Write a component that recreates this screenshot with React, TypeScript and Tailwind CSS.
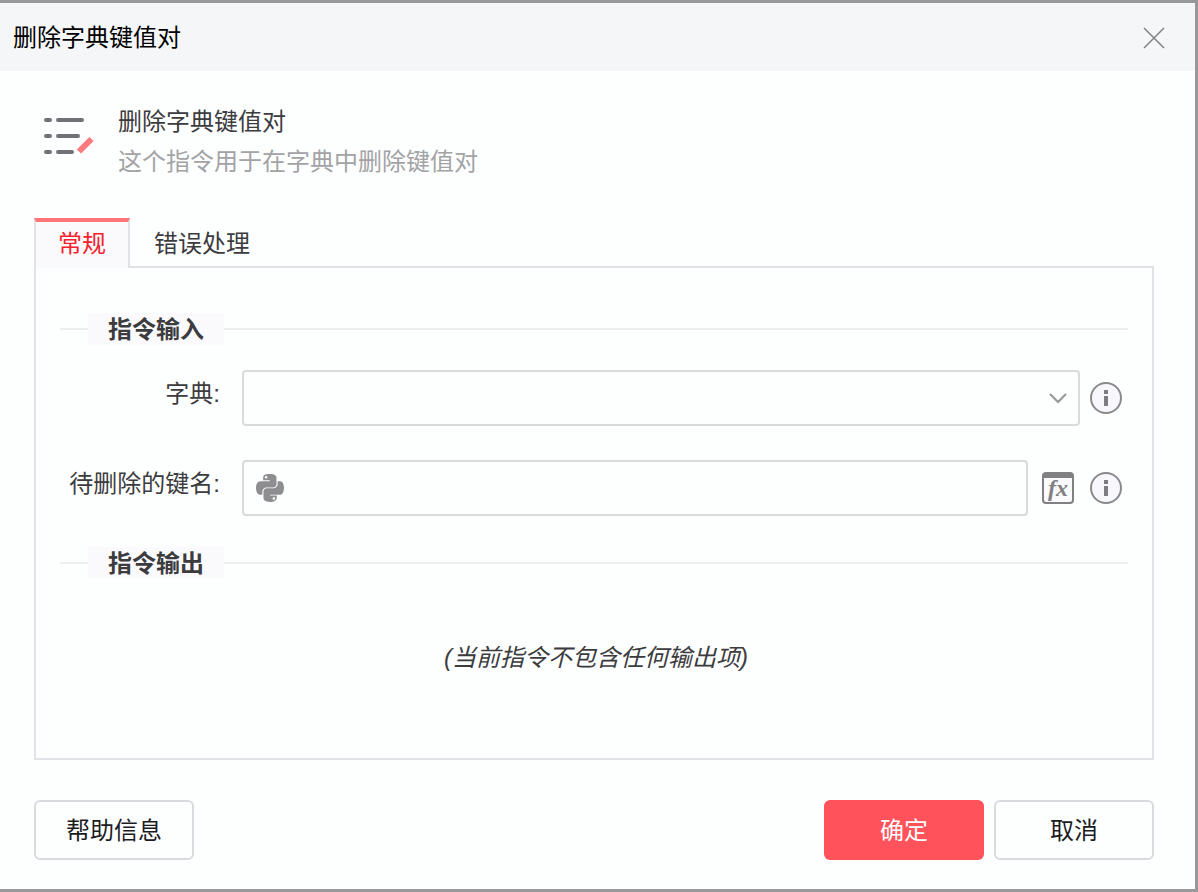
import React, { useState } from "react";
import { FaPython } from "react-icons/fa";

const ListEditIcon = () => (
  <svg width="56" height="44" viewBox="0 0 56 44" fill="none" aria-hidden="true">
    <g stroke="#717278" strokeWidth="4" strokeLinecap="round">
      <path d="M4 6h4M16 6h24M4 22h4M16 22h20M4 38h4M16 38h14" />
    </g>
    <path d="M37 37.5 49.5 25" stroke="#fa7a7d" strokeWidth="6" />
  </svg>
);

const InfoButton = ({ label }: { label: string }) => (
  <button type="button" aria-label={label} className="shrink-0">
    <svg width="32" height="32" viewBox="0 0 32 32" className="block">
      <circle cx="16" cy="16" r="15" fill="#f8f8fc" stroke="#8a8a8d" strokeWidth="2" />
      <path d="M14 8h4v4h-4zM14 14h4v10h-4z" fill="#7e7e82" />
    </svg>
  </button>
);

const SectionTitle = ({ children }: { children: React.ReactNode }) => (
  <div className="flex items-center">
    <div className="h-0.5 w-7 bg-[#eeeeef]"></div>
    <h3 className="bg-[#fafafd] px-5 pt-0.5 font-bold leading-[30px]">{children}</h3>
    <div className="h-0.5 flex-1 bg-[#eeeeef]"></div>
  </div>
);

const App = () => {
  const [tab, setTab] = useState("general");
  const [dict, setDict] = useState("");
  const [keyName, setKeyName] = useState("");

  const activeTab = "border-x-2 border-t-4 border-x-[#e2e2e6] border-t-[#fd7377] bg-[#fafafd] text-[#f5222d]";
  const idleTab = "border-x-2 border-t-4 border-transparent";

  return (
    <div className="flex min-h-screen flex-col border-t-3 border-r-3 border-b-3 border-[#98989a] bg-[#fdfefe] font-['Liberation_Sans','Noto_Sans_CJK_SC',sans-serif] text-2xl text-[#3c3c3f]">
      {/* Title bar */}
      <header className="flex items-center justify-between bg-[#f5f6f8] pb-[15px] pl-[13px] pr-[30px] pt-[17px] text-black">
        <h1 className="leading-9">删除字典键值对</h1>
        <button type="button" aria-label="关闭">
          <svg width="22" height="22" viewBox="0 0 22 22" stroke="#858587" strokeWidth="1.6" className="block">
            <path d="M1 1l20 20M21 1L1 21" />
          </svg>
        </button>
      </header>

      <main className="flex flex-1 flex-col pb-[29px] pl-[34px] pr-[41px] pt-[31px]">
        <div className="flex items-center gap-5 pl-2">
          <div className="pb-3">
            <ListEditIcon />
          </div>
          <div className="leading-10">
            <h2>删除字典键值对</h2>
            <p className="text-[#a3a3a6]">这个指令用于在字典中删除键值对</p>
          </div>
        </div>

        {/* Tabs */}
        <div role="tablist" className="z-10 -mb-0.5 mt-9 flex">
          <button
            type="button"
            role="tab"
            aria-selected={tab === "general"}
            onClick={() => setTab("general")}
            className={`h-[50px] px-[22px] pb-0.5 leading-9 ${tab === "general" ? activeTab : idleTab}`}
          >
            常规
          </button>
          <button
            type="button"
            role="tab"
            aria-selected={tab === "error"}
            onClick={() => setTab("error")}
            className={`h-[50px] px-[22px] pb-0.5 leading-9 ${tab === "error" ? activeTab : idleTab}`}
          >
            错误处理
          </button>
        </div>

        <div role="tabpanel" className="flex-1 border-2 border-[#e2e2e6] px-6 pt-[45px]">
          <SectionTitle>指令输入</SectionTitle>

          <div className="mt-[25px] flex items-center pr-1.5">
            <label htmlFor="dict" className="w-40 shrink-0 pb-2 text-right">
              字典:
            </label>
            <div className="relative ml-[22px] mr-2.5 flex-1">
              <select
                id="dict"
                value={dict}
                onChange={(e) => setDict(e.target.value)}
                className="block h-14 w-full appearance-none rounded border-2 border-[#dadadc] bg-transparent px-3"
              >
                <option value=""></option>
              </select>
              <svg
                width="18"
                height="12"
                viewBox="0 0 18 12"
                fill="none"
                stroke="#98989b"
                strokeWidth="2.2"
                className="pointer-events-none absolute right-[13px] top-[22px]"
              >
                <path d="M1 2l8 8 8-8" />
              </svg>
            </div>
            <InfoButton label="字典说明" />
          </div>

          <div className="mt-[34px] flex items-center pr-1.5">
            <label htmlFor="key-name" className="w-40 shrink-0 pb-2 text-right">
              待删除的键名:
            </label>
            <div className="ml-[22px] mr-3.5 flex h-14 flex-1 items-center gap-2 rounded border-2 border-[#dadadc] pl-2.5">
              <FaPython className="size-8 shrink-0 text-[#8e8e90]" />
              <input
                id="key-name"
                type="text"
                value={keyName}
                onChange={(e) => setKeyName(e.target.value)}
                className="h-full min-w-0 flex-1 bg-transparent outline-none"
              />
            </div>
            <button
              type="button"
              aria-label="表达式"
              className="mr-4 flex size-8 shrink-0 items-center justify-center rounded border-2 border-t-6 border-[#808082] bg-[#fafafd] pb-1 font-['Liberation_Serif',serif] text-2xl font-bold italic leading-6 text-[#808083]"
            >
              fx
            </button>
            <InfoButton label="键名说明" />
          </div>

          <div className="mt-[31px]">
            <SectionTitle>指令输出</SectionTitle>
          </div>
          <p className="mt-[61px] pl-1 text-center italic leading-9">(当前指令不包含任何输出项)</p>
        </div>

        {/* Footer */}
        <footer className="mt-10 flex gap-2.5 text-[#1c1c1e]">
          <button type="button" className="mr-auto h-[60px] w-40 rounded-md border-2 border-[#dadade] pt-0.5">
            帮助信息
          </button>
          <button type="button" className="h-[60px] w-40 rounded-md bg-[#ff525b] pt-0.5 text-white">
            确定
          </button>
          <button type="button" className="h-[60px] w-40 rounded-md border-2 border-[#dadade] pt-0.5">
            取消
          </button>
        </footer>
      </main>
    </div>
  );
};

export default App;
